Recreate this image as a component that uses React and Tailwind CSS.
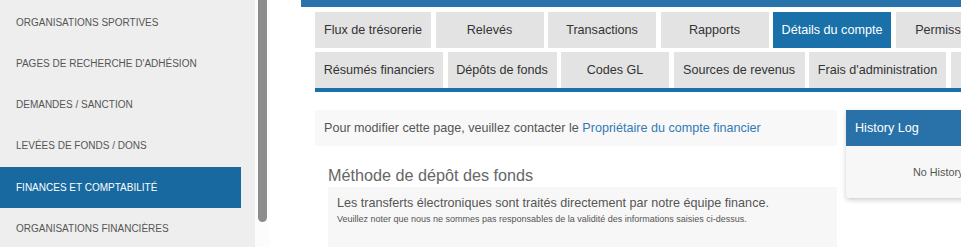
import React from 'react';

const sideItems = [
  'ORGANISATIONS SPORTIVES',
  "PAGES DE RECHERCHE D'ADHÉSION",
  'DEMANDES / SANCTION',
  'LEVÉES DE FONDS / DONS',
  'FINANCES ET COMPTABILITÉ',
  'ORGANISATIONS FINANCIÈRES',
];

const row1 = [
  { label: 'Flux de trésorerie', w: 'w-[116px]' },
  { label: 'Relevés', w: 'w-[108px]' },
  { label: 'Transactions', w: 'w-[108px]' },
  { label: 'Rapports', w: 'w-[108px]' },
  { label: 'Détails du compte', w: 'w-[118px]', active: true },
  { label: 'Permissions', w: 'w-[108px]' },
];

const row2 = [
  { label: 'Résumés financiers', w: 'w-[128px]' },
  { label: 'Dépôts de fonds', w: 'w-[109px]' },
  { label: 'Codes GL', w: 'w-[108px]' },
  { label: 'Sources de revenus', w: 'w-[131px]' },
  { label: "Frais d'administration", w: 'w-[137px]' },
  { label: 'Paramètres', w: 'w-[120px]' },
];

function Tab({ label, w, active }) {
  return (
    <div
      className={`${w} shrink-0 h-[36px] flex items-center justify-center whitespace-nowrap text-[12.6px] ${
        active ? 'bg-[#1a70a8] text-white' : 'bg-[#e3e3e3] text-[#333]'
      }`}
    >
      {label}
    </div>
  );
}

export default function App() {
  return (
    <div
      className="w-[961px] h-[247px] overflow-hidden flex bg-white"
      style={{ fontFamily: '"Liberation Sans", Arial, sans-serif' }}
    >
      {/* Sidebar */}
      <div className="w-[255px] shrink-0 bg-[#eeeeee] pt-[2px]">
        {sideItems.map((item, i) => (
          <div
            key={item}
            className={`h-[41.25px] w-[241px] flex items-center pl-4 pb-[1px] text-[10px] whitespace-nowrap ${
              i === 4 ? 'bg-[#1769a0] text-white' : 'text-[#555]'
            }`}
          >
            {item}
          </div>
        ))}
      </div>

      {/* Scroll track */}
      <div className="w-[15px] shrink-0 bg-[#fcfcfc] flex flex-col">
        <div className="ml-[3px] w-[9px] h-[222px] bg-[#8c8c8c] rounded-b-[5px]" />
      </div>

      {/* Main */}
      <div className="ml-[31px] flex-1 min-w-0 overflow-hidden">
        <div className="h-[7px] bg-[#2773aa]" />
        <div className="pl-[14px] pt-[5px]">
          <div className="flex gap-[4.5px]">
            {row1.map((t) => (
              <Tab key={t.label} {...t} />
            ))}
          </div>
          <div className="flex gap-[4.5px] mt-[4px]">
            {row2.map((t) => (
              <Tab key={t.label} {...t} />
            ))}
          </div>
          <div className="h-[4px] bg-[#1a70a8]" />

          <div className="flex gap-[9px] mt-[18px]">
            <div className="w-[522px] shrink-0">
              <div className="h-[36px] bg-[#f8f8f8] pl-[9px] flex items-center text-[12.6px] text-[#555] whitespace-nowrap">
                Pour modifier cette page, veuillez contacter le&nbsp;
                <span className="text-[#337ab7]">Propriétaire du compte financier</span>
              </div>
              <h2 className="ml-[13px] mt-[20px] mb-[3px] text-[16.2px] leading-[18px] text-[#666]">
                Méthode de dépôt des fonds
              </h2>
              <div className="ml-[13px] bg-[#f7f7f7] px-[9px] pt-[9px] pb-[30px]">
                <div className="text-[12.6px] leading-[14px] text-[#555]">
                  Les transferts électroniques sont traités directement par notre équipe finance.
                </div>
                <div className="mt-[4px] text-[9px] leading-[11px] text-[#555]">
                  Veuillez noter que nous ne sommes pas responsables de la validité des informations saisies ci-dessus.
                </div>
              </div>
            </div>

            <div className="w-[240px] shrink-0 self-start rounded-b-[4px] shadow-[0_2px_5px_rgba(0,0,0,0.2)] overflow-hidden">
              <div className="h-[36px] bg-[#2872a9] pl-[9px] flex items-center text-[12.6px] font-medium text-white">
                History Log
              </div>
              <div className="h-[52px] bg-[#f7f7f7] pl-[67px] flex items-center text-[10.8px] text-[#555] whitespace-nowrap">
                No History Data
              </div>
            </div>
          </div>
        </div>
      </div>
    </div>
  );
}
